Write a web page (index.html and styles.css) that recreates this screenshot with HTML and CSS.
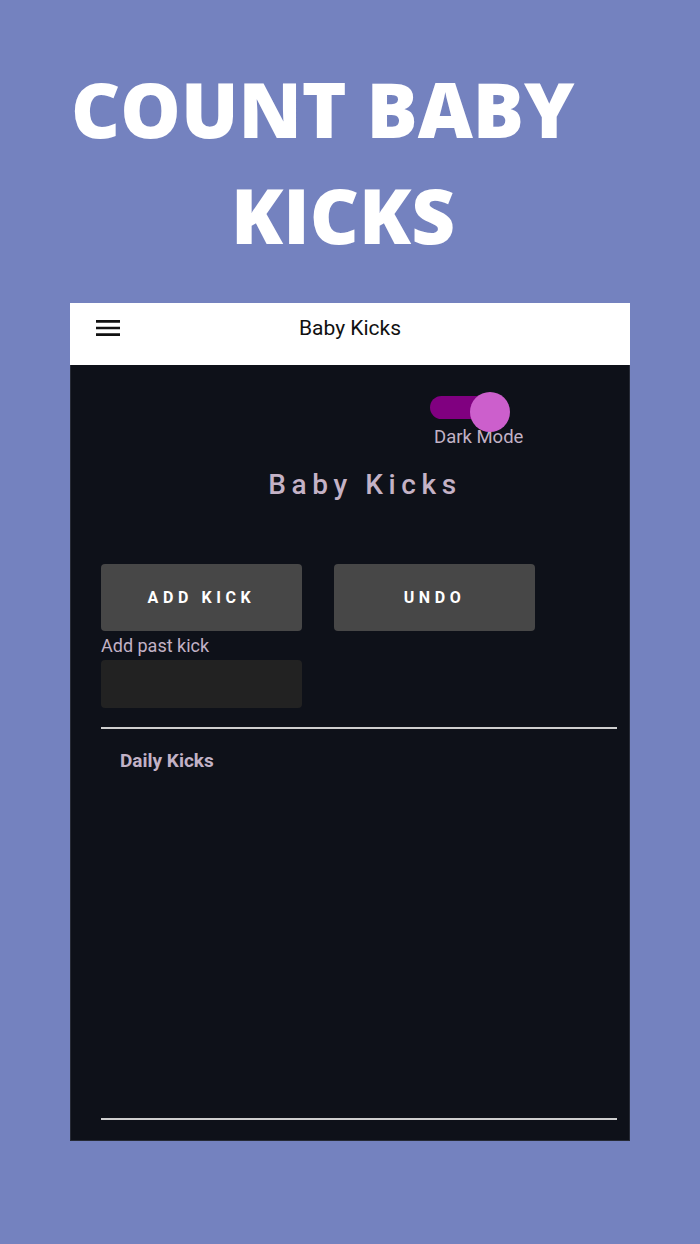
FILE: index.html
```html
<!DOCTYPE html>
<html lang="en">
<head>
<meta charset="utf-8">
<title>Count Baby Kicks</title>
<link rel="stylesheet" href="styles.css">
</head>
<body>
<header class="promo">
  <h1 class="promo-title"><span class="line line-1">COUNT BABY</span><span class="line line-2">KICKS</span></h1>
</header>
<main class="phone">
  <div class="appbar">
    <svg class="menu-icon" width="32" height="32" viewBox="0 0 24 24" aria-hidden="true"><path d="M3 18h18v-2H3v2zm0-5h18v-2H3v2zm0-7v2h18V6H3z" fill="#111"/></svg>
    <div class="appbar-title">Baby Kicks</div>
  </div>
  <div class="screen">
    <div class="toggle-group">
      <div class="switch"><span class="track"></span><span class="thumb"></span></div>
      <div class="toggle-label">Dark Mode</div>
    </div>
    <h2 class="heading">Baby Kicks</h2>
    <div class="actions">
      <button class="btn">ADD KICK</button>
      <button class="btn">UNDO</button>
    </div>
    <label class="past-label">Add past kick</label>
    <div class="past-input"></div>
    <section class="daily">
      <div class="daily-title">Daily Kicks</div>
    </section>
  </div>
</main>
</body>
</html>
```

FILE: styles.css
```css
* { box-sizing: border-box; }
html, body { margin: 0; padding: 0; }
body {
  background: #7482bf;
  width: 700px;
  height: 1244px;
  font-family: Roboto, "Liberation Sans", sans-serif;
}
.promo { height: 303px; padding-top: 56px; }
.promo-title {
  margin: 0;
  font-family: "Open Sans", "Liberation Sans", sans-serif;
  font-weight: 800;
  font-size: 76px;
  line-height: 106px;
  color: #fff;
}
.line { display: block; white-space: nowrap; }
.line-1 { padding-left: 71px; }
.line-2 { padding-left: 231px; }

.phone {
  margin: 0 70px;
  width: 560px;
  height: 838px;
  display: flex;
  flex-direction: column;
}
.appbar {
  height: 62px;
  background: #fff;
  display: flex;
  align-items: center;
  padding: 0 0 12px 22px;
}
.menu-icon { display: block; }
.appbar-title {
  flex: 1;
  text-align: center;
  font-size: 21px;
  color: #111;
  margin-right: 54px;
}
.screen {
  flex: 1;
  background: #0e1119;
  border: 1px solid #262a35;
  border-top: none;
  padding: 27px 12px 0 30px;
  display: flex;
  flex-direction: column;
}
.toggle-group { margin-left: 333px; width: 120px; }
.switch { position: relative; width: 80px; height: 35px; margin-left: -4px; }
.track {
  position: absolute; left: 0; top: 4px;
  width: 62px; height: 23px;
  border-radius: 12px;
  background: #800080;
}
.thumb {
  position: absolute; left: 40px; top: 0;
  width: 40px; height: 40px;
  border-radius: 50%;
  background: #cc5fcc;
}
.toggle-label {
  font-size: 18.5px;
  line-height: 21px;
  color: #c2b2c6;
}
.heading {
  margin: 20px 0 0 0;
  padding-left: 12px;
  text-align: center;
  font-size: 28px;
  font-weight: 500;
  letter-spacing: 5.6px;
  line-height: 34px;
  color: #c4b2c6;
}
.actions { display: flex; gap: 32px; margin-top: 62px; }
.btn {
  width: 201px;
  height: 67px;
  border: none;
  border-radius: 4px;
  background: #474747;
  color: #fff;
  font-family: Roboto, "Liberation Sans", sans-serif;
  font-weight: 700;
  font-size: 16px;
  letter-spacing: 4.6px;
  padding: 0;
}
.past-label {
  display: block;
  margin-top: 4px;
  font-size: 18px;
  line-height: 22px;
  color: #c2b2c6;
}
.past-input {
  width: 201px;
  height: 48px;
  margin-top: 3px;
  border-radius: 4px;
  background: #222222;
}
.daily {
  margin-top: 19px;
  height: 393px;
  border-top: 2px solid #cfcfcf;
  border-bottom: 2px solid #cfcfcf;
  padding: 21px 0 0 19px;
}
.daily-title {
  font-size: 19px;
  font-weight: 700;
  line-height: 22px;
  color: #c2b2c6;
}
```
